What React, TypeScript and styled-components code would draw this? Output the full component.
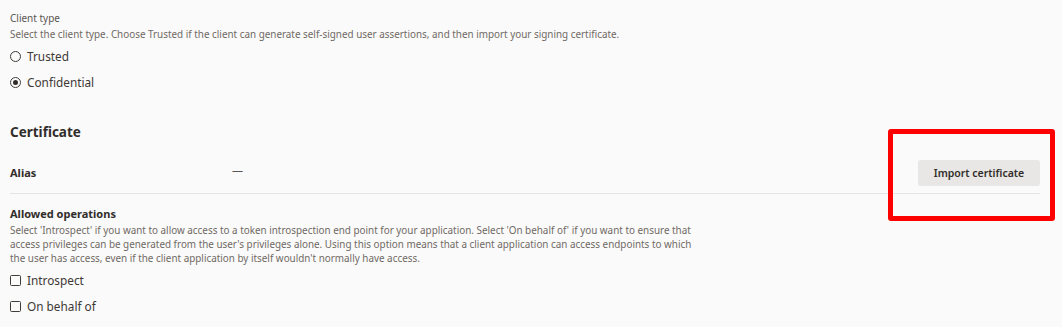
import React from 'react'
import styled, { createGlobalStyle } from 'styled-components'

const GlobalStyle = createGlobalStyle`
  html, body {
    margin: 0;
    padding: 0;
    background: #fafafa;
    font-family: 'Noto Sans', 'Open Sans', sans-serif;
    color: #312d2a;
  }
`

const Page = styled.div`
  width: 1062px;
  height: 327px;
  box-sizing: border-box;
  padding: 11px 22px 0 10px;
  overflow: hidden;
`

const FieldLabel = styled.div`
  font-size: 10px;
  line-height: 14px;
  color: #5b5652;
`

const Help = styled.p<{ $max?: number }>`
  margin: 2px 0 0;
  font-size: 9.9px;
  line-height: 14px;
  color: #6f6964;
  max-width: ${(p) => (p.$max ? `${p.$max}px` : 'none')};
`

const OptionList = styled.div`
  display: flex;
  flex-direction: column;
  gap: 8px;
  margin-top: 6px;
`

const Option = styled.label`
  display: flex;
  align-items: center;
  gap: 6px;
  height: 18px;
  font-size: 11.8px;
  color: #3d3935;
`

const Radio = styled.span<{ $checked?: boolean }>`
  width: 9px;
  height: 9px;
  border: 1.3px solid #403c38;
  border-radius: 50%;
  display: flex;
  align-items: center;
  justify-content: center;
  &::after {
    content: '';
    display: ${(p) => (p.$checked ? 'block' : 'none')};
    width: 5px;
    height: 5px;
    border-radius: 50%;
    background: #312d2a;
  }
`

const Checkbox = styled.span`
  width: 9px;
  height: 9px;
  border: 1.3px solid #403c38;
  border-radius: 1.5px;
`

const SectionTitle = styled.h2`
  margin: 32px 0 0;
  font-size: 13.5px;
  line-height: 18px;
  font-weight: 700;
  color: #312d2a;
`

const AliasRow = styled.div`
  display: flex;
  align-items: center;
  height: 52px;
  border-bottom: 1px solid #e6e4e2;
`

const AliasName = styled.div`
  width: 222px;
  font-size: 11px;
  font-weight: 700;
  color: #312d2a;
  padding-top: 10px;
`

const AliasValue = styled.div`
  flex: 1;
  font-size: 11px;
  color: #5b5652;
  padding-top: 4px;
`

const Highlight = styled.div`
  position: relative;
  align-self: flex-start;
  margin-top: 19px;
`

const ImportButton = styled.button`
  height: 26px;
  width: 122px;
  border: none;
  border-radius: 3px;
  background: #e8e7e5;
  font-family: inherit;
  font-size: 10.5px;
  font-weight: 600;
  color: #312d2a;
  cursor: pointer;
`

const RedFrame = styled.div`
  position: absolute;
  left: -30px;
  top: -31px;
  width: 157px;
  height: 82px;
  border: 5px solid #ff0000;
  border-radius: 3px;
  pointer-events: none;
`

const SubTitle = styled.div`
  margin-top: 12px;
  font-size: 11px;
  line-height: 15px;
  font-weight: 700;
  color: #312d2a;
`

const App = () => {
  return (
    <>
      <GlobalStyle />
      <Page>
        <FieldLabel>Client type</FieldLabel>
        <Help>
          Select the client type. Choose Trusted if the client can generate self-signed user assertions, and then import your signing certificate.
        </Help>
        <OptionList>
          <Option>
            <Radio />
            Trusted
          </Option>
          <Option>
            <Radio $checked />
            Confidential
          </Option>
        </OptionList>

        <SectionTitle>Certificate</SectionTitle>
        <AliasRow>
          <AliasName>Alias</AliasName>
          <AliasValue>—</AliasValue>
          <Highlight>
            <ImportButton>Import certificate</ImportButton>
            <RedFrame />
          </Highlight>
        </AliasRow>

        <SubTitle>Allowed operations</SubTitle>
        <Help $max={697}>
          Select 'Introspect' if you want to allow access to a token introspection end point for your application. Select 'On behalf of' if you want to ensure that access privileges can be generated from the user's privileges alone. Using this option means that a client application can access endpoints to which the user has access, even if the client application by itself wouldn't normally have access.
        </Help>
        <OptionList>
          <Option>
            <Checkbox />
            Introspect
          </Option>
          <Option>
            <Checkbox />
            On behalf of
          </Option>
        </OptionList>
      </Page>
    </>
  )
}

export default App
